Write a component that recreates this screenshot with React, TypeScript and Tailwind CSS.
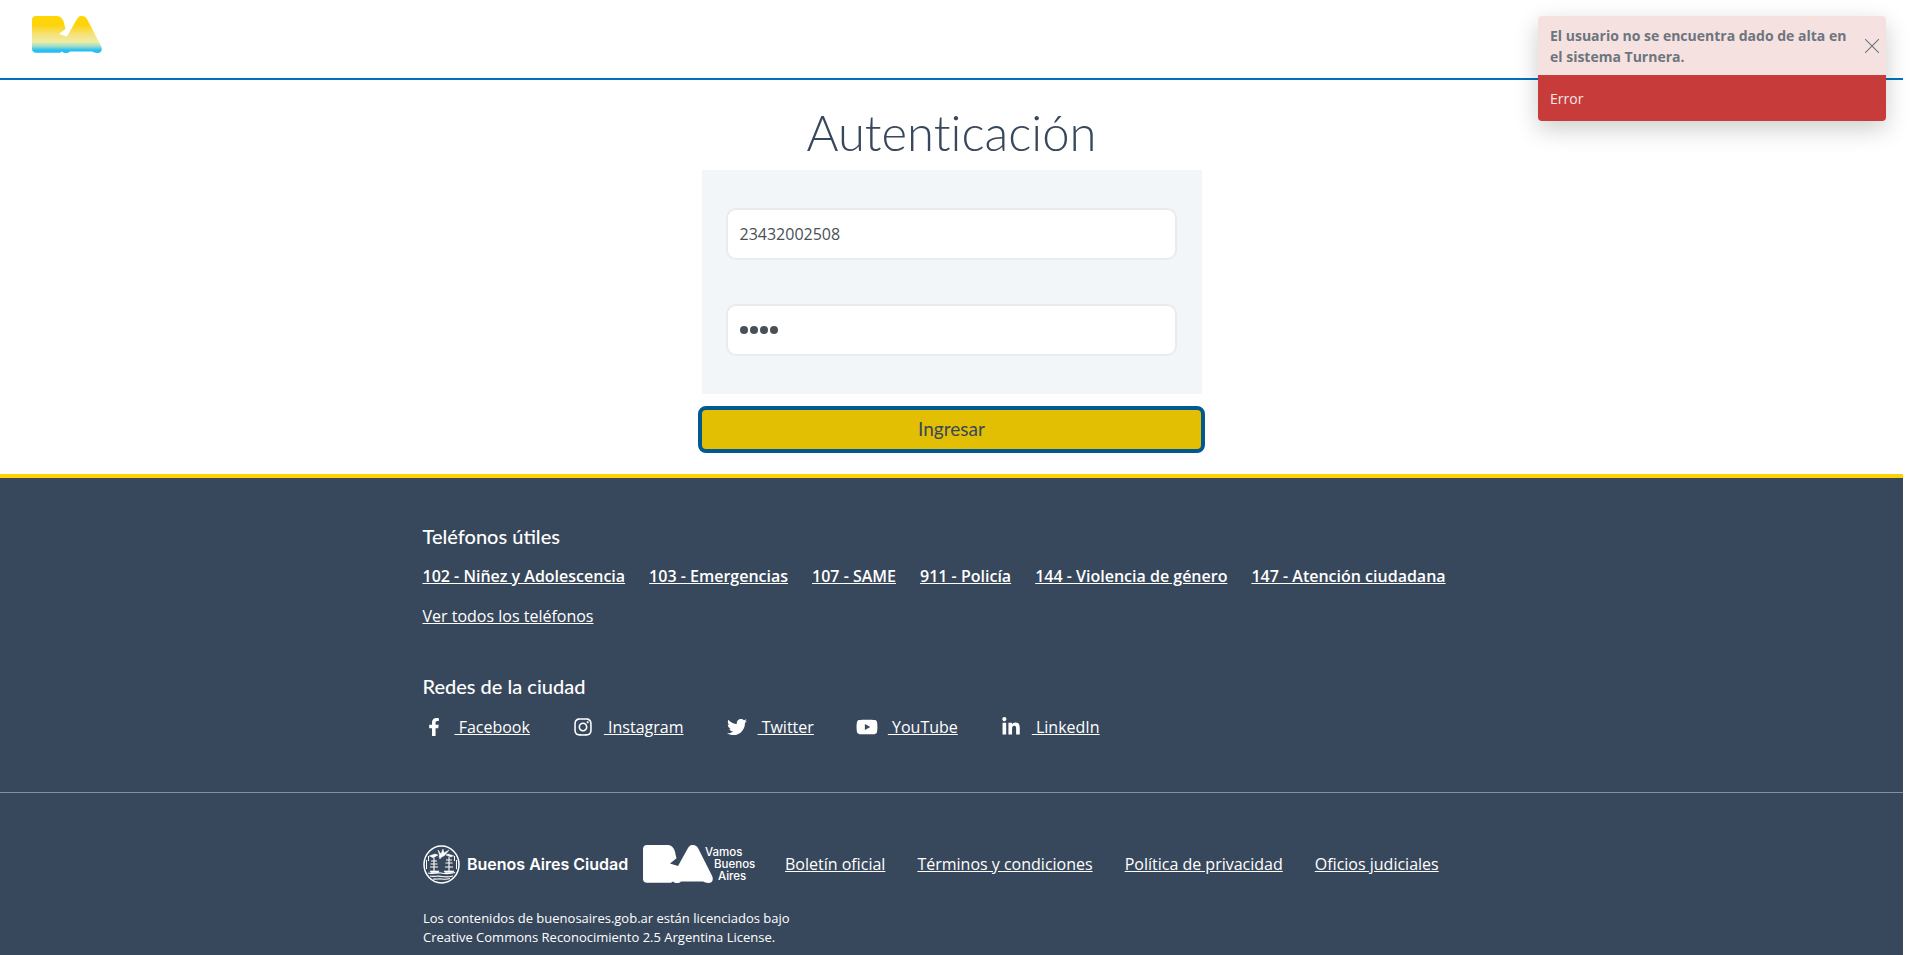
import React from "react";
import { FaFacebookF, FaInstagram, FaTwitter, FaYoutube, FaLinkedinIn } from "react-icons/fa";

const BA_PATH =
  "M4 0H25C29 0 32 4 32.500 9C33 11 33.500 12.500 33.500 13L27 18L35 20.500L45 3C46.500 .5 48 0 50 0C52 0 54 1 55 3L69 30C71 34 69 37 65.500 37C63 37 61.500 36 60 35.500H38C37 36.500 35.500 37 34 37C32.500 37 31 36.500 30 35.500L28 36.700H4C1.500 36.700 0 35 0 33V4C0 1.500 1.500 0 4 0Z";

function BaLogo({ className, fill }: { className: string; fill: string }) {
  return (
    <svg viewBox="0 0 70 37" className={className} preserveAspectRatio="none">
      <defs>
        <linearGradient id="ba-grad" x1="0" y1="0" x2="0" y2="1">
          <stop offset="0" stopColor="#ffd600" />
          <stop offset="0.25" stopColor="#fdd40d" />
          <stop offset="0.5" stopColor="#f5e27a" />
          <stop offset="0.7" stopColor="#eeeda4" />
          <stop offset="0.82" stopColor="#9adccb" />
          <stop offset="0.92" stopColor="#2bc0ee" />
          <stop offset="1" stopColor="#22bdf0" />
        </linearGradient>
      </defs>
      <path d={BA_PATH} fill={fill} />
    </svg>
  );
}

function Escudo() {
  return (
    <svg viewBox="0 0 37 39" className="h-[39px] w-[37px] shrink-0" fill="none" stroke="white">
      <ellipse cx="18.500" cy="19.500" rx="17.500" ry="18.500" strokeWidth="1.500" />
      <path d="M5 28c4 1.500 8-1 13 0s9 1 14-.5M7 31c4 1 8-.5 12 .5s7 .5 11-.5M10 34c3 .5 6-.5 9 0s5 .5 8-.5" strokeWidth="1.200" />
      <path d="M11 13v13M8 16h6M7.500 19h7M7 22h8M26 12v14M23 15h6M22.500 18h7M22 22h8" strokeWidth="1.100" />
      <path d="M7 26h9l-1 1.500H8zM21 26h10l-1.500 1.500H22z" fill="white" strokeWidth=".6" />
      <path d="M15 5l3 4 2-5 1 4 5-3-4 5c-2 2-4 1.500-5 4-1-2-1-3-.5-4zM6 11l6-2 3 1-5 3M31 11l-6-2-2 1 5 2" fill="white" strokeWidth=".5" />
      <path d="M3.500 15v9M33.500 15v9M5.500 11v5M31.500 11v5" strokeWidth="1" />
    </svg>
  );
}

const phones = [
  "102 - Niñez y Adolescencia",
  "103 - Emergencias",
  "107 - SAME",
  "911 - Policía",
  "144 - Violencia de género",
  "147 - Atención ciudadana",
];

const socials = [
  { name: "Facebook", Icon: FaFacebookF, cls: "h-[18px] w-[18px]" },
  { name: "Instagram", Icon: FaInstagram, cls: "h-[20px] w-[20px]" },
  { name: "Twitter", Icon: FaTwitter, cls: "h-[20px] w-[20px]" },
  { name: "YouTube", Icon: FaYoutube, cls: "h-[20px] w-[22px]" },
  { name: "LinkedIn", Icon: FaLinkedinIn, cls: "h-[20px] w-[20px]" },
];

const legal = ["Boletín oficial", "Términos y condiciones", "Política de privacidad", "Oficios judiciales"];

const openSans = "font-['Open_Sans',sans-serif]";
const heading = "font-['Lato',sans-serif]";

export default function App() {
  return (
    <div className={`relative h-[955px] w-[1920px] overflow-hidden bg-white ${openSans}`}>
      <div className="w-[1903px]">
        <header className="flex h-[80px] items-start border-b-2 border-[#0072bb] pl-[32px] pt-[16px]">
          <BaLogo className="h-[37px] w-[70px]" fill="url(#ba-grad)" />
        </header>

        <main className="flex h-[394px] flex-col items-center">
          <h1
            className={`mt-[22px] h-[68px] text-[49px] font-light leading-[60px] text-[#38485c] [font-variant-ligatures:none] ${heading}`}
          >
            Autenticación
          </h1>
          <div className="flex h-[224px] w-[500px] flex-col gap-[44px] bg-[#f3f6f9] pl-[24px] pr-[25px] pt-[38px]">
            <div className="flex h-[52px] items-center rounded-[10px] border-2 border-[#e9ecef] bg-white px-[12px] text-[16px] text-[#495057]">
              23432002508
            </div>
            <div className="flex h-[52px] items-center gap-[2px] rounded-[10px] border-2 border-[#e9ecef] bg-white px-[12px]">
              <span className="h-[8px] w-[8px] rounded-full bg-[#495057]" />
              <span className="h-[8px] w-[8px] rounded-full bg-[#495057]" />
              <span className="h-[8px] w-[8px] rounded-full bg-[#495057]" />
              <span className="h-[8px] w-[8px] rounded-full bg-[#495057]" />
            </div>
          </div>
          <button
            className={`mt-[12px] flex h-[47px] w-[507px] items-center justify-center rounded-[8px] border-4 border-[#005a91] bg-[#e2bf03] text-[19px] text-[#38485c] ${heading}`}
          >
            Ingresar
          </button>
        </main>

        <footer className="h-[481px] border-t-4 border-[#fdd306] bg-[#38485c] text-white">
          <div className="pl-[422.5px]">
            <h2 className={`pt-[45px] text-[20px] font-medium leading-[26px] ${heading}`}>Teléfonos útiles</h2>
            <div className="mt-[15px] flex gap-[24px] text-[16px] font-semibold leading-[24px]">
              {phones.map((p) => (
                <a key={p} className="underline">
                  {p}
                </a>
              ))}
            </div>
            <a className="mt-[16px] block w-fit text-[16px] leading-[24px] underline">Ver todos los teléfonos</a>
            <h2 className={`mt-[45px] text-[20px] font-medium leading-[26px] ${heading}`}>Redes de la ciudad</h2>
            <div className="mt-[16px] flex gap-[42px] text-[16px] leading-[24px]">
              {socials.map(({ name, Icon, cls }) => (
                <div key={name} className="flex items-center">
                  <span className="mr-[10px] flex w-[22px] justify-center">
                    <Icon className={cls} />
                  </span>
                  <a className="whitespace-pre underline">{" " + name}</a>
                </div>
              ))}
            </div>
          </div>
          <div className="mt-[53px] border-t border-[#8390a0]" />
          <div className="pl-[423px]">
            <div className="mt-[50px] flex h-[42px] items-center">
              <Escudo />
              <span className="ml-[7px] w-[160px] whitespace-nowrap font-['Inter',sans-serif] text-[16px] font-semibold">
                Buenos Aires Ciudad
              </span>
              <BaLogo className="ml-[16px] h-[38px] w-[70px]" fill="white" />
              <div className="ml-[-8px] flex w-[50px] flex-col font-['Inter',sans-serif] text-[11.5px] font-medium leading-[12px]">
                <span>Vamos</span>
                <span className="pl-[9px]">Buenos</span>
                <span className="pl-[13px]">Aires</span>
              </div>
              <div className="ml-[30px] flex gap-[32px] text-[16px]">
                {legal.map((l) => (
                  <a key={l} className="underline">
                    {l}
                  </a>
                ))}
              </div>
            </div>
            <p className="mt-[24px] text-[13px] leading-[19px]">
              Los contenidos de buenosaires.gob.ar están licenciados bajo
              <br />
              Creative Commons Reconocimiento 2.5 Argentina License.
            </p>
          </div>
        </footer>
      </div>

      <div className="absolute left-[1538px] top-[16px] w-[348px] overflow-hidden rounded-[4px] shadow-[0_8px_24px_rgba(0,0,0,0.2)]">
        <div className="flex h-[59px] items-center bg-[#f6e1e1] pl-[12px]">
          <p className="w-[306px] text-[14px] font-bold leading-[21px] text-[#6c757d]">
            El usuario no se encuentra dado de alta en el sistema Turnera.
          </p>
          <svg viewBox="0 0 14 14" className="ml-[9px] h-[14px] w-[14px] shrink-0" stroke="#6c757d" strokeWidth="1.100">
            <path d="M0 0L14 14M14 0L0 14" />
          </svg>
        </div>
        <div className="flex h-[46px] items-center bg-[#c83b3b] px-[12px] text-[14px] text-[#f8e8e8]">Error</div>
      </div>
    </div>
  );
}
